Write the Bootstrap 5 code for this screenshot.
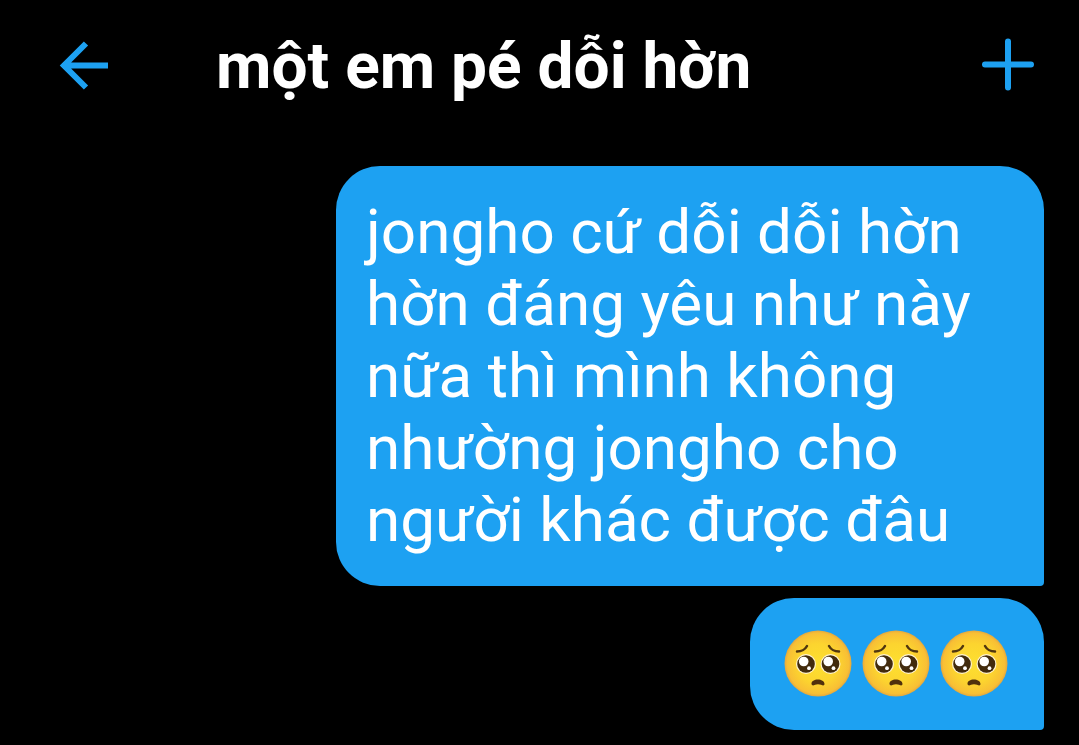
<!DOCTYPE html>
<html lang="vi">
<head>
<meta charset="utf-8">
<meta name="viewport" content="width=device-width, initial-scale=1">
<title>một em pé dỗi hờn</title>
<link href="https://cdn.jsdelivr.net/npm/bootstrap@5.3.0/dist/css/bootstrap.min.css" rel="stylesheet">
<style>
body { background: #000; color: #fff; font-family: Roboto, "Noto Sans", sans-serif; }
.chat-header { height: 130px; padding: 0 39px 0 56px; }
.chat-header .btn { color: #1da1f2; --bs-btn-border-width: 0px; }
.chat-title { font-size: 64px; line-height: 72px; font-weight: 700; margin-left: 104px; padding-top: 4px; }
.chat-log { padding: 36px 35px 15px; gap: 12px; }
.bubble { background: #1da1f2; color: #fff; font-size: 62px; line-height: 72px; padding: 30px; max-width: 708px; border-radius: 44px 44px 4px 44px; }
.emoji-row { height: 72px; margin-right: 2px; gap: 2px; }
</style>
</head>
<body>
<header class="chat-header d-flex align-items-center">
  <button type="button" class="btn p-0 d-flex" aria-label="Quay lại">
    <svg width="56" height="56" viewBox="0 0 56 56" fill="none" stroke="currentColor" stroke-width="6" aria-hidden="true"><path d="M52 28.500H9M30 6.500L8 28.500L30 50.500"/></svg>
  </button>
  <h1 class="chat-title mb-0 me-auto">một em pé dỗi hờn</h1>
  <button type="button" class="btn p-0 d-flex" aria-label="Thêm">
    <svg width="64" height="64" viewBox="0 0 64 64" fill="none" stroke="currentColor" stroke-width="6" stroke-linecap="round" aria-hidden="true"><path d="M32 8.500V54.500M9 31.500H55"/></svg>
  </button>
</header>
<main class="chat-log d-flex flex-column align-items-end">
  <div class="bubble">jongho cứ dỗi dỗi hờn hờn đáng yêu như này nữa thì mình không nhường jongho cho người khác được đâu</div>
  <div class="bubble">
    <div class="emoji-row d-flex align-items-center" role="img" aria-label="Ba mặt cầu xin">
      <svg width="76" height="76" viewBox="0 0 76 76" aria-hidden="true">
        <defs>
          <radialGradient id="skin" cx=".5" cy=".5" r=".5">
            <stop offset="0" stop-color="#fde030"/><stop offset=".6" stop-color="#fcd42f"/><stop offset=".92" stop-color="#f8bf35"/><stop offset="1" stop-color="#e3a83f"/>
          </radialGradient>
          <g id="eye">
            <circle r="10" fill="#fff3d0"/><circle r="8.8" fill="#422b0d"/><circle cx="-2.3" cy="-2.5" r="4.8" fill="#fff"/><circle cx="3" cy="4.2" r="1.900" fill="#fff"/>
          </g>
          <g id="pleading">
            <ellipse cx="38" cy="37.500" rx="33.500" ry="33" fill="url(#skin)"/>
            <use href="#eye" x="26" y="38"/><use href="#eye" x="50.500" y="38"/>
            <path d="M17 25.500Q24 25.500 27 20M49 20Q52 25.500 59 25.500" fill="none" stroke="#50360f" stroke-width="2.500" stroke-linecap="round"/>
            <path d="M31.500 58C31 52 44.500 52 44.500 58C44 61 41.500 58.300 38 58.300S32.500 61 31.500 58Z" fill="#50300d"/>
          </g>
        </defs>
        <use href="#pleading"/>
      </svg>
      <svg width="76" height="76" viewBox="0 0 76 76" aria-hidden="true"><use href="#pleading"/></svg>
      <svg width="76" height="76" viewBox="0 0 76 76" aria-hidden="true"><use href="#pleading"/></svg>
    </div>
  </div>
</main>
<script src="https://cdn.jsdelivr.net/npm/bootstrap@5.3.0/dist/js/bootstrap.bundle.min.js"></script>
</body>
</html>
